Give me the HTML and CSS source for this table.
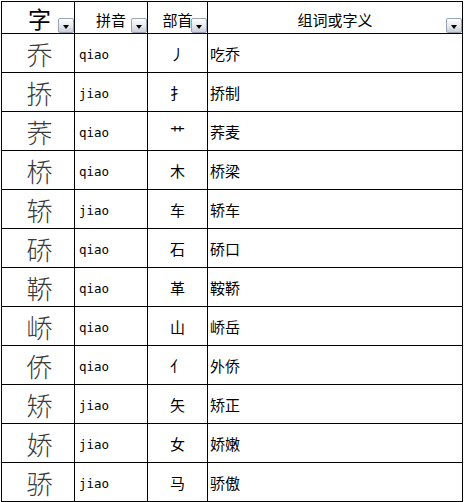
FILE: index.html
```html
<!DOCTYPE html>
<html lang="zh-CN">
<head>
<meta charset="utf-8">
<title>乔字族</title>
<link rel="stylesheet" href="styles.css">
</head>
<body>
<div class="sheet">
  <div class="hd hd-big"><span class="hd-char">字</span><i class="dd"></i></div>
  <div class="hd"><span>拼音</span><i class="dd"></i></div>
  <div class="hd"><span>部首</span><i class="dd"></i></div>
  <div class="hd"><span>组词或字义</span><i class="dd"></i></div>

  <div class="c big">乔</div><div class="c py">qiao</div><div class="c rad">丿</div><div class="c word">吃乔</div>
  <div class="c big">挢</div><div class="c py">jiao</div><div class="c rad">扌</div><div class="c word">挢制</div>
  <div class="c big">荞</div><div class="c py">qiao</div><div class="c rad">艹</div><div class="c word">荞麦</div>
  <div class="c big">桥</div><div class="c py">qiao</div><div class="c rad">木</div><div class="c word">桥梁</div>
  <div class="c big">轿</div><div class="c py">jiao</div><div class="c rad">车</div><div class="c word">轿车</div>
  <div class="c big">硚</div><div class="c py">qiao</div><div class="c rad">石</div><div class="c word">硚口</div>
  <div class="c big">鞒</div><div class="c py">qiao</div><div class="c rad">革</div><div class="c word">鞍鞒</div>
  <div class="c big">峤</div><div class="c py">qiao</div><div class="c rad">山</div><div class="c word">峤岳</div>
  <div class="c big">侨</div><div class="c py">qiao</div><div class="c rad">亻</div><div class="c word">外侨</div>
  <div class="c big">矫</div><div class="c py">jiao</div><div class="c rad">矢</div><div class="c word">矫正</div>
  <div class="c big">娇</div><div class="c py">jiao</div><div class="c rad">女</div><div class="c word">娇嫩</div>
  <div class="c big">骄</div><div class="c py">jiao</div><div class="c rad">马</div><div class="c word">骄傲</div>
</div>
</body>
</html>
```

FILE: styles.css
```css
html, body {
  margin: 0;
  padding: 0;
  background: #ffffff;
}
body {
  padding: 1px 0 0 1px;
  font-family: "Noto Sans CJK SC", "Noto Sans", sans-serif;
  color: #000;
}
.sheet {
  display: grid;
  grid-template-columns: 72px 72px 59px 254px;
  grid-template-rows: 31px repeat(12, 38px);
  gap: 1px;
  padding: 1px;
  background: #000;
  width: max-content;
}
.hd, .c {
  background: #fff;
  display: flex;
  align-items: center;
  justify-content: center;
}
.hd {
  position: relative;
  font-size: 15px;
  line-height: normal;
  padding-top: 4px;
  box-sizing: border-box;
}
.hd-big {
  align-items: flex-start;
  padding-top: 0;
  padding-left: 3px;
}
.hd-char {
  font-size: 23px;
  line-height: normal;
  margin-top: -1.5px;
}
.dd {
  position: absolute;
  right: 0;
  bottom: 0;
  width: 14px;
  height: 13px;
  border: 1px solid #9aa3b4;
  border-radius: 2px;
  background: linear-gradient(#ffffff, #e6e8ec 55%, #c9ced8);
  box-sizing: content-box;
}
.dd::after {
  content: "";
  position: absolute;
  left: 4px;
  top: 6px;
  border-left: 3.5px solid transparent;
  border-right: 3.5px solid transparent;
  border-top: 4px solid #000;
}
.big {
  font-size: 26px;
  line-height: normal;
  color: #3a3a3a;
  font-weight: 300;
  padding-left: 3px;
}
.py {
  justify-content: flex-start;
  padding-left: 4px;
  font-family: "DejaVu Sans Mono", "Liberation Mono", monospace;
  font-size: 12.5px;
  padding-top: 2px;
}
.rad {
  font-size: 15px;
  padding-top: 1px;
}
.word {
  justify-content: flex-start;
  padding-left: 2px;
  font-size: 15px;
  padding-top: 1px;
}
```
